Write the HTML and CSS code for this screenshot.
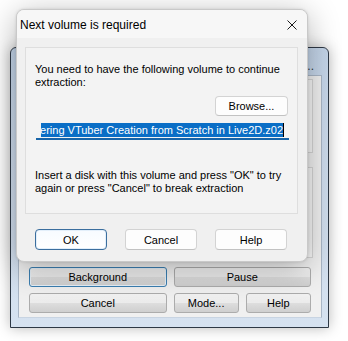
FILE: index.html
```html
<!DOCTYPE html>
<html>
<head>
<meta charset="utf-8">
<link rel="stylesheet" href="styles.css">
</head>
<body>
<div class="desk">
  <div class="backwin">
    <div class="bw-title"><span class="bw-title-text">Extracting...</span></div>
    <div class="bw-client">
      <div class="bw-group g1"></div>
      <div class="bw-group g2"></div>
      <div class="bw-buttons">
        <button class="w7btn focus span2">Background</button>
        <button class="w7btn span2">Pause</button>
        <button class="w7btn span2">Cancel</button>
        <button class="w7btn">Mode...</button>
        <button class="w7btn">Help</button>
      </div>
    </div>
  </div>

  <div class="dialog">
    <div class="dlg-title">
      <span class="dlg-title-text">Next volume is required</span>
      <svg class="close-x" width="10" height="10" viewBox="0 0 10 10"><path d="M0.5 0.5 L9.5 9.5 M9.5 0.5 L0.5 9.5" stroke="#1b1b1b" stroke-width="1" fill="none"/></svg>
    </div>
    <div class="dlg-body">
      <div class="panel">
        <p class="msg">You need to have the following volume to continue extraction:</p>
        <div class="browse-row"><button class="w11btn browse">Browse...</button></div>
        <div class="field">
          <div class="field-inner">
            <span class="sel">Mastering VTuber Creation from Scratch in Live2D.z02</span><span class="caret"></span>
          </div>
        </div>
        <p class="msg msg2">Insert a disk with this volume and press "OK" to try again or press "Cancel" to break extraction</p>
      </div>
      <div class="dlg-buttons">
        <button class="w11btn default">OK</button>
        <button class="w11btn">Cancel</button>
        <button class="w11btn">Help</button>
      </div>
    </div>
  </div>
</div>
</body>
</html>
```

FILE: styles.css
```css
html, body {
  margin: 0;
  padding: 0;
  background: #ffffff;
}
body {
  font-family: "Liberation Sans", Arial, sans-serif;
  font-size: 11px;
  color: #000;
}
.desk {
  position: relative;
  width: 348px;
  height: 341px;
  overflow: hidden;
  background: #ffffff;
}

/* ---------- back window (Windows 7 style) ---------- */
.backwin {
  position: absolute;
  left: 10px;
  top: 47px;
  width: 319px;
  height: 281px;
  box-sizing: border-box;
  border: 1px solid #2e3845;
  border-radius: 6px 6px 0 0;
  background: linear-gradient(180deg, #c3d4e8 0%, #cddbec 40%, #d6e2f0 100%);
  padding: 0 6px 9px 7px;
  display: flex;
  flex-direction: column;
  box-shadow: 0 0 14px rgba(0, 0, 0, 0.28);
}
.bw-title {
  height: 27px;
  flex: none;
  padding: 11px 8px 0 8px;
  box-sizing: border-box;
  display: flex;
  justify-content: flex-end;
}
.bw-title-text {
  display: block;
  font-size: 12px;
  line-height: 14px;
  color: #333a44;
  white-space: nowrap;
}
.bw-client {
  flex: 1;
  background: #f0f0f0;
  border: 1px solid #a9b6c6;
  border-bottom-color: #c8d4e2;
  padding: 3px 8px 4px 10px;
  display: flex;
  flex-direction: column;
  gap: 14px;
}
.bw-group {
  border: 1px solid #d5d5d5;
  background: #f6f6f6;
}
.g1 { height: 72px; }
.g2 { height: 89px; margin-bottom: -5px; }
.bw-buttons {
  display: grid;
  grid-template-columns: 1fr 1fr 1fr 1fr;
  column-gap: 7px;
  row-gap: 6px;
  margin-right: 2px;
}
.span2 { grid-column: span 2; }
.w7btn {
  font-family: "Liberation Sans", Arial, sans-serif;
  font-size: 11px;
  height: 20px;
  padding: 0;
  color: #000;
  border: 1px solid #acacac;
  border-radius: 3px;
  background: linear-gradient(180deg, #f2f2f2 0%, #ebebeb 48%, #dddddd 52%, #cfcfcf 100%);
}
.w7btn.focus {
  border-color: #3c7fb1;
  box-shadow: inset 0 0 0 1px #e6f0f8;
}

/* ---------- front dialog (Windows 11 style) ---------- */
.dialog {
  position: absolute;
  left: 16px;
  top: 9px;
  width: 292px;
  height: 253px;
  box-sizing: border-box;
  border: 1px solid #c9c9c9;
  border-radius: 8px;
  background: #f0f0f0;
  box-shadow: 0 6px 32px rgba(0, 0, 0, 0.30), 0 0 3px rgba(0, 0, 0, 0.12);
  display: flex;
  flex-direction: column;
  overflow: hidden;
}
.dlg-title {
  height: 28px;
  flex: none;
  background: #f7f7f7;
  display: flex;
  align-items: center;
  justify-content: space-between;
  padding: 0 10px 0 3px;
}
.dlg-title-text {
  font-size: 12px;
  color: #000;
  margin-top: 1px;
}
.close-x {
  display: block;
  margin-top: 1px;
}
.dlg-body {
  flex: 1;
  padding: 9px 9px 10px 8px;
  display: flex;
  flex-direction: column;
}
.panel {
  height: 167px;
  box-sizing: border-box;
  border: 1px solid #dedede;
  background: #f3f3f3;
  padding: 15px 9px 0 9px;
}
.msg {
  margin: 0;
  line-height: 13px;
  font-size: 11px;
  width: 250px;
}
.browse-row {
  display: flex;
  justify-content: flex-end;
  margin-top: 7px;
}
.w11btn {
  font-family: "Liberation Sans", Arial, sans-serif;
  font-size: 11px;
  color: #000;
  height: 21px;
  width: 72px;
  padding: 0;
  background: #fdfdfd;
  border: 1px solid #d3d3d3;
  border-bottom-color: #c2c2c2;
  border-radius: 4px;
}
.browse {
  width: 73px;
  height: 20px;
}
.w11btn.default {
  border: 1px solid #3b6e9e;
  background: linear-gradient(180deg, #f7fbff, #ffffff);
  box-shadow: inset 0 0 0 1px #e3effa;
}
.field {
  margin: 5px -1px 0 1px;
  height: 19px;
  box-sizing: border-box;
  border-bottom: 2px solid #1764a8;
  padding: 2px 5px 0 5px;
}
.field-inner {
  overflow: hidden;
  display: flex;
  justify-content: flex-end;
  white-space: nowrap;
  height: 15px;
}
.sel {
  flex: none;
  background: #0a6ec6;
  color: #ffffff;
  line-height: 14px;
  height: 14px;
  font-size: 11px;
}
.caret {
  flex: none;
  width: 1px;
  height: 14px;
  background: #000;
}
.msg2 {
  margin-top: 29px;
  width: 260px;
}
.dlg-buttons {
  display: flex;
  gap: 18px;
  margin-top: 15px;
  padding-left: 10px;
}
```
